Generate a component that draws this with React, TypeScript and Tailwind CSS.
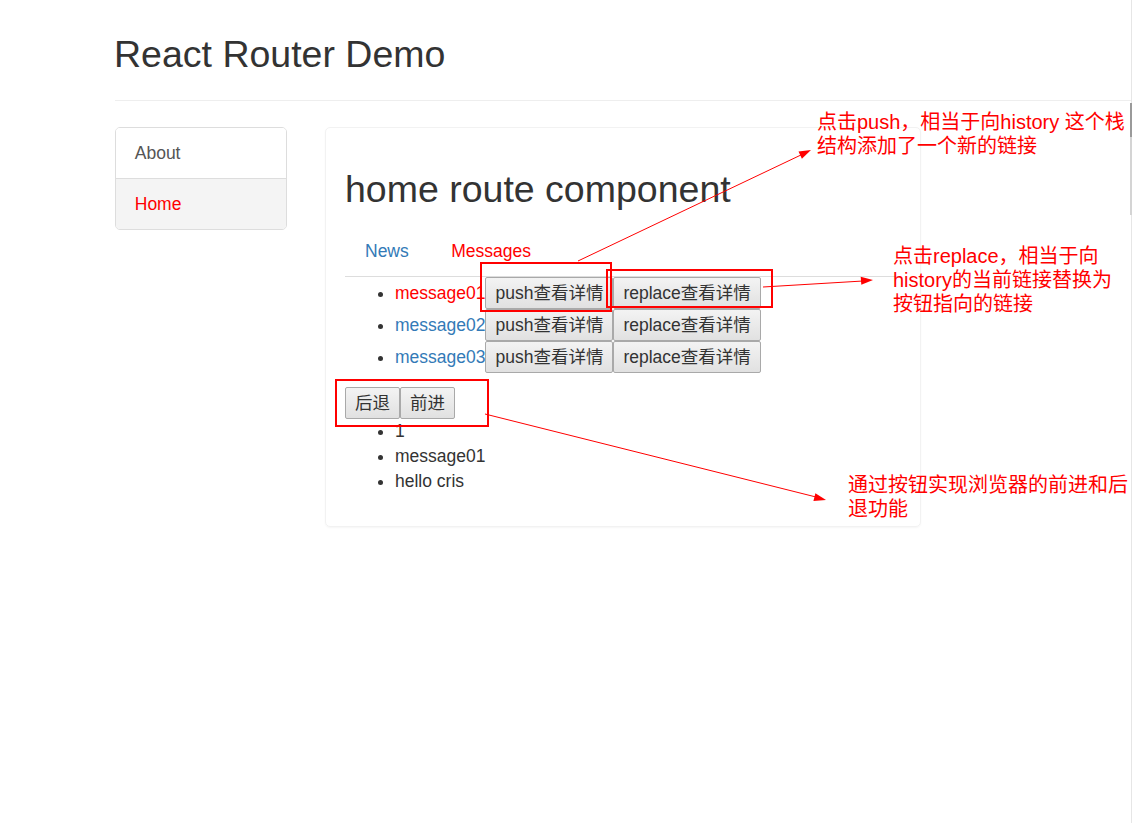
import React from 'react';

const messages = [
  { id: '01', title: 'message01', active: true },
  { id: '02', title: 'message02', active: false },
  { id: '03', title: 'message03', active: false },
];

const btn =
  'h-[32px] px-[9px] leading-[30px] border border-[#a9a9a9] rounded-[2px] bg-gradient-to-b from-[#f3f3f3] to-[#e1e1e1] text-[#333] align-top';

// notes drawn over the screenshot: boxes, arrows and the red comments
function Annotations() {
  return (
    <>
      <div className="absolute left-[480px] top-[262px] w-[132px] h-[50px] border-2 border-[#ff0000]" />
      <div className="absolute left-[606px] top-[269px] w-[167px] h-[39px] border-2 border-[#ff0000]" />
      <div className="absolute left-[335px] top-[379px] w-[154px] h-[48px] border-2 border-[#ff0000]" />

      <svg className="absolute left-0 top-0 pointer-events-none" width="1133" height="823">
        <line x1="578" y1="261" x2="803" y2="154" stroke="#ff0000" strokeWidth="1" />
        <polygon points="811,150 801.9,158.8 798.5,151.6" fill="#ff0000" />
        <line x1="763" y1="287" x2="863" y2="281" stroke="#ff0000" strokeWidth="1" />
        <polygon points="873,280 861.3,284.8 860.7,276.8" fill="#ff0000" />
        <line x1="485" y1="414" x2="816" y2="497" stroke="#ff0000" strokeWidth="1" />
        <polygon points="826,500 813.4,501 815.4,493.2" fill="#ff0000" />
      </svg>

      <div className="absolute left-[817px] top-[110px] text-[20px] leading-[24px] text-[#ff0000] whitespace-nowrap">
        点击push，相当于向history 这个栈
        <br />
        结构添加了一个新的链接
      </div>
      <div className="absolute left-[893px] top-[244px] text-[20px] leading-[24px] text-[#ff0000] whitespace-nowrap">
        点击replace，相当于向
        <br />
        history的当前链接替换为
        <br />
        按钮指向的链接
      </div>
      <div className="absolute left-[848px] top-[473px] text-[20px] leading-[24px] text-[#ff0000] whitespace-nowrap">
        通过按钮实现浏览器的前进和后
        <br />
        退功能
      </div>

      {/* scrollbar edge */}
      <div className="absolute left-[1131px] top-0 w-[1px] h-[823px] bg-[#e6e6e6]" />
      <div className="absolute left-[1130px] top-[137px] w-[2px] h-[78px] bg-[#d4d4d4]" />
      <div className="absolute left-[1130px] top-[103px] w-[2px] h-[34px] bg-[#9a9a9a]" />
    </>
  );
}

export default function App() {
  return (
    <div
      className="relative w-[1133px] h-[823px] bg-white text-[#333] text-[17.5px] leading-[25px] overflow-hidden"
      style={{ fontFamily: '"Liberation Sans", Arial, "Noto Sans CJK SC", sans-serif' }}
    >
      <div className="ml-[115px] w-[1016px]">
        <div className="pt-[34px] pb-[25px] border-b border-[#eee]">
          <h1 className="text-[37.5px] leading-[41px] font-normal -ml-[1px]">React Router Demo</h1>
        </div>

        <div className="flex mt-[26px]">
          <div className="w-[172px] self-start border border-[#ddd] rounded-[5px] overflow-hidden">
            <a className="block px-[18.75px] py-[12.5px] text-[#555] bg-white border-b border-[#ddd]">About</a>
            <a className="block px-[18.75px] py-[12.5px] text-[#ff0000] bg-[#f4f4f4]">Home</a>
          </div>

          <div className="ml-[38px] w-[596px] border border-[#f2f2f2] rounded-[5px] shadow-[0_1px_2px_rgba(0,0,0,0.04)] p-[19px]">
            <h2 className="mt-[22px] mb-[16px] text-[37.5px] leading-[41px] font-normal">home route component</h2>

            <ul className="flex border-b border-[#ddd]">
              <li className="mr-[2.5px]">
                <a className="block px-[20px] py-[12.5px] text-[#337ab7]">News</a>
              </li>
              <li className="mr-[2.5px]">
                <a className="block px-[20px] py-[12.5px] text-[#ff0000]">Messages</a>
              </li>
            </ul>

            <ul className="list-disc pl-[50px] mb-[14px]">
              {messages.map((m) => (
                <li key={m.id} className="leading-[32px] h-[32px]">
                  <a className={m.active ? 'text-[#ff0000]' : 'text-[#337ab7]'}>{m.title}</a>
                  <button className={btn}>push查看详情</button>
                  <button className={btn}>replace查看详情</button>
                </li>
              ))}
            </ul>

            <div className="flex">
              <button className={btn}>后退</button>
              <button className={btn}>前进</button>
            </div>

            <ul className="list-disc pl-[50px] mb-[12.5px]">
              <li>1</li>
              <li>message01</li>
              <li>hello cris</li>
            </ul>
          </div>
        </div>
      </div>

      <Annotations />
    </div>
  );
}
